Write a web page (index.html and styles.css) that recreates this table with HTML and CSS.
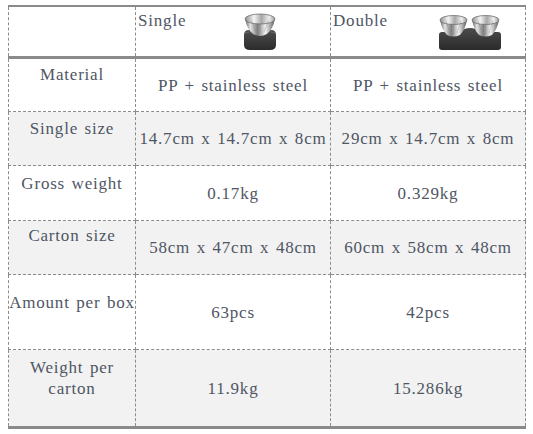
FILE: index.html
```html
<!DOCTYPE html>
<html>
<head>
<meta charset="utf-8">
<link rel="stylesheet" href="styles.css">
</head>
<body>
<table class="spec">
  <colgroup>
    <col class="c-label">
    <col class="c-val">
    <col class="c-val">
  </colgroup>
  <thead>
    <tr class="head">
      <th></th>
      <th>
        <div class="hcell">
          <span class="htitle">Single</span>
          <svg class="bowl bowl-single" width="34" height="38" viewBox="0 0 34 38">
            <defs>
              <linearGradient id="steel1" x1="0" y1="0" x2="1" y2="0">
                <stop offset="0" stop-color="#5f5f5f"/>
                <stop offset="0.18" stop-color="#e4e4e4"/>
                <stop offset="0.42" stop-color="#7e7e7e"/>
                <stop offset="0.68" stop-color="#f2f2f2"/>
                <stop offset="1" stop-color="#5a5a5a"/>
              </linearGradient>
              <linearGradient id="inner1" x1="0" y1="0" x2="1" y2="0">
                <stop offset="0" stop-color="#8e8e8e"/>
                <stop offset="0.3" stop-color="#f4f4f4"/>
                <stop offset="0.55" stop-color="#a8a8a8"/>
                <stop offset="0.8" stop-color="#eeeeee"/>
                <stop offset="1" stop-color="#9a9a9a"/>
              </linearGradient>
              <linearGradient id="base1" x1="0" y1="0" x2="0" y2="1">
                <stop offset="0" stop-color="#4e4e4e"/>
                <stop offset="1" stop-color="#2b2b2b"/>
              </linearGradient>
            </defs>
            <path d="M1 22 Q1 17 6 17 L28 17 Q33 17 33 22 L33 32 Q33 37 27 37 L7 37 Q1 37 1 32 Z" fill="url(#base1)"/>
            <path d="M2 20 Q17 15 32 20" stroke="#666" stroke-width="1" fill="none"/>
            <path d="M2 6 Q4 16 10 21 Q17 25 24 21 Q30 16 32 6 Z" fill="url(#steel1)"/>
            <ellipse cx="17" cy="6" rx="15" ry="5" fill="url(#inner1)" stroke="#6e6e6e" stroke-width="0.8"/>
            <path d="M8 7 Q11 14 13 19 M17 10 L17 21 M26 7 Q23 14 21 19" stroke="#7c7c7c" stroke-width="0.6" fill="none" opacity="0.55"/>
          </svg>
        </div>
      </th>
      <th>
        <div class="hcell">
          <span class="htitle">Double</span>
          <svg class="bowl bowl-double" width="64" height="36" viewBox="0 0 64 36">
            <defs>
              <linearGradient id="steel2" x1="0" y1="0" x2="1" y2="0">
                <stop offset="0" stop-color="#5f5f5f"/>
                <stop offset="0.18" stop-color="#e4e4e4"/>
                <stop offset="0.42" stop-color="#7e7e7e"/>
                <stop offset="0.68" stop-color="#f2f2f2"/>
                <stop offset="1" stop-color="#5a5a5a"/>
              </linearGradient>
              <linearGradient id="inner2" x1="0" y1="0" x2="1" y2="0">
                <stop offset="0" stop-color="#8e8e8e"/>
                <stop offset="0.3" stop-color="#f4f4f4"/>
                <stop offset="0.55" stop-color="#a8a8a8"/>
                <stop offset="0.8" stop-color="#eeeeee"/>
                <stop offset="1" stop-color="#9a9a9a"/>
              </linearGradient>
              <linearGradient id="base2" x1="0" y1="0" x2="0" y2="1">
                <stop offset="0" stop-color="#4c4c4c"/>
                <stop offset="1" stop-color="#2a2a2a"/>
              </linearGradient>
            </defs>
            <path d="M1 20 Q1 17 4 17 L22 17 Q26 13 32 13 Q38 13 42 17 L60 17 Q63 17 63 20 L63 32 Q63 35 60 35 L4 35 Q1 35 1 32 Z" fill="url(#base2)"/>
            <path d="M2 5 Q4 15 9 20 Q15.5 23 22 20 Q27 15 29 5 Z" fill="url(#steel2)"/>
            <ellipse cx="15.5" cy="5" rx="13.5" ry="4.5" fill="url(#inner2)" stroke="#6e6e6e" stroke-width="0.8"/>
            <path d="M8 6 Q10 12 12 18 M15.5 8 L15.5 19 M23 6 Q21 12 19 18" stroke="#7c7c7c" stroke-width="0.6" fill="none" opacity="0.55"/>
            <path d="M34 5 Q36 15 41 20 Q47.5 23 54 20 Q59 15 61 5 Z" fill="url(#steel2)"/>
            <ellipse cx="47.5" cy="5" rx="13.5" ry="4.5" fill="url(#inner2)" stroke="#6e6e6e" stroke-width="0.8"/>
            <path d="M40 6 Q42 12 44 18 M47.5 8 L47.5 19 M55 6 Q53 12 51 18" stroke="#7c7c7c" stroke-width="0.6" fill="none" opacity="0.55"/>
          </svg>
        </div>
      </th>
    </tr>
  </thead>
  <tbody>
    <tr class="row white r-material">
      <th>Material</th>
      <td>PP + stainless steel</td>
      <td>PP + stainless steel</td>
    </tr>
    <tr class="row gray r-size">
      <th>Single size</th>
      <td>14.7cm x 14.7cm x 8cm</td>
      <td>29cm x 14.7cm x 8cm</td>
    </tr>
    <tr class="row white r-gross">
      <th>Gross weight</th>
      <td>0.17kg</td>
      <td>0.329kg</td>
    </tr>
    <tr class="row gray r-carton">
      <th>Carton size</th>
      <td>58cm x 47cm x 48cm</td>
      <td>60cm x 58cm x 48cm</td>
    </tr>
    <tr class="row white r-amount">
      <th>Amount per box</th>
      <td>63pcs</td>
      <td>42pcs</td>
    </tr>
    <tr class="row gray r-weight">
      <th>Weight per<br>carton</th>
      <td>11.9kg</td>
      <td>15.286kg</td>
    </tr>
  </tbody>
</table>
</body>
</html>
```

FILE: styles.css
```css
html, body {
  margin: 0;
  padding: 0;
  background: #ffffff;
}

.spec {
  border-collapse: collapse;
  table-layout: fixed;
  width: 517px;
  margin: 5px 0 0 8px;
  font-family: "Liberation Serif", "DejaVu Serif", serif;
  font-size: 17px;
  letter-spacing: 0.8px;
  word-spacing: 1.5px;
  line-height: 21px;
  color: #4f5664;
  white-space: nowrap;
}

.c-label { width: 127px; }
.c-val { width: 195px; }

.spec th,
.spec td {
  border: 1px dashed #8c8c8c;
  padding: 0;
  font-weight: normal;
}

.head {
  border-top: 2px solid #8a8a8a;
  border-bottom: 3px solid #8a8a8a;
}

.head th {
  height: 49px;
  vertical-align: top;
  text-align: left;
}

.hcell {
  display: flex;
  align-items: flex-start;
  padding: 3px 0 0 2px;
  height: 46px;
}

.htitle {
  line-height: 21px;
}

.bowl-single {
  margin: 3px 0 0 57px;
}

.bowl-double {
  margin: 5px 0 0 50px;
}

.row th {
  text-align: center;
  vertical-align: top;
}

.row td {
  text-align: center;
  vertical-align: middle;
}

.white { background: #ffffff; }
.gray { background: #f2f2f2; }

.r-material td { height: 52px; }
.r-material th { padding-top: 5px; height: 47px; }

.r-size td { height: 53px; }
.r-size th { padding-top: 6px; height: 47px; }

.r-gross td { height: 54px; }
.r-gross th { padding-top: 7px; height: 47px; }

.r-carton td { height: 53px; }
.r-carton th { padding-top: 4px; height: 49px; }

.r-amount td { height: 74px; }
.r-amount th { padding-top: 17px; height: 57px; }

.r-weight {
  border-bottom: 3px solid #8a8a8a;
}
.r-weight td { height: 76px; }
.r-weight th { padding-top: 7px; height: 69px; }
```
